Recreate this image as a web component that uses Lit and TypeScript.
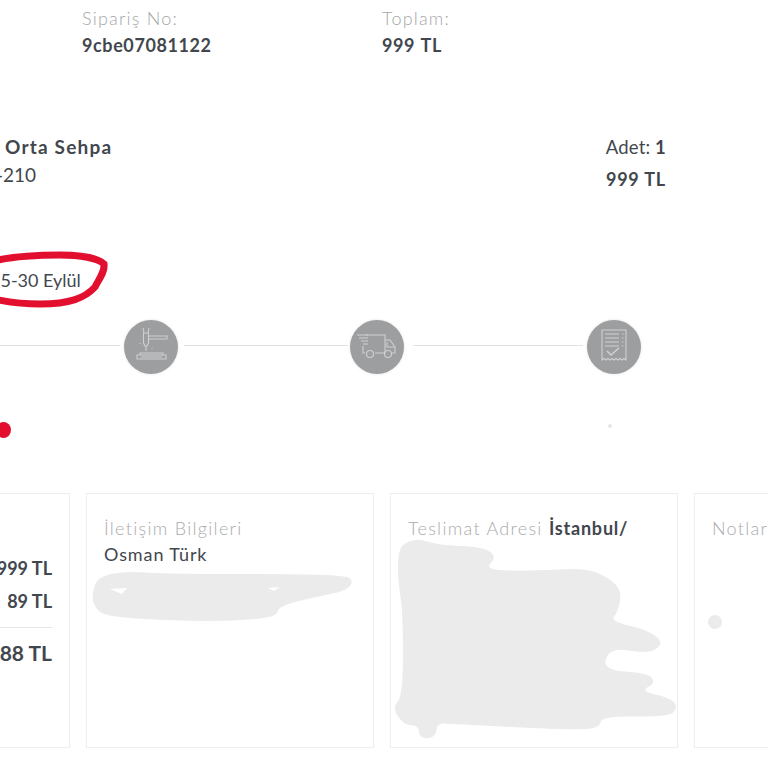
import { LitElement, html, css, svg } from 'lit';
import { customElement } from 'lit/decorators.js';

// rounds the corners of a traced shape, so the redaction blobs look brushed
const blob = (pts: number[][]) => {
  const mid = (a: number[], b: number[]) => `${(a[0] + b[0]) / 2} ${(a[1] + b[1]) / 2}`;
  let d = `M${mid(pts[pts.length - 1], pts[0])}`;
  pts.forEach((p, i) => {
    d += `Q${p[0]} ${p[1]} ${mid(p, pts[(i + 1) % pts.length])}`;
  });
  return `${d}Z`;
};

const contactBlob = blob([
  [92, 595], [97, 577], [125, 571], [167, 574], [345, 574], [354, 582], [345, 591], [320, 596],
  [278, 606], [277, 617], [233, 621], [187, 621], [105, 617], [94, 606],
]);

const addressBlob = blob([
  [401, 545], [417, 538], [437, 545], [484, 547], [497, 557], [484, 570], [531, 571], [584, 568],
  [606, 576], [622, 590], [618, 612], [610, 621], [651, 631], [664, 644], [648, 654], [610, 647],
  [602, 670], [648, 673], [656, 683], [640, 691], [671, 698], [678, 708], [668, 717], [601, 716],
  [600, 728], [571, 730], [451, 724], [437, 723], [436, 737], [420, 739], [418, 725], [404, 725],
  [392, 708], [403, 696], [403, 613], [398, 580], [398, 558],
]);

const weldIcon = svg`
  <path d="M13 35h29v4H13z" />
  <path d="M16 35v-2h23v2M17 37h21" />
  <path d="M19 8l1 5h4l1-5M19.500 13h5v10l-1.500 3h-2l-1.500-3zM22 26v5" />
  <path d="M25 16h18v3H25" />
  <path d="M16 23v1M28 28v1" />
`;

const truckIcon = svg`
  <path d="M16 15h19v18H25M15 33h-2v-7" />
  <path d="M35 20h5l5 7v6h-3M35 33h-1M37 22v5h7" />
  <circle cx="20" cy="34" r="3.500" />
  <circle cx="38" cy="34" r="3.500" />
  <path d="M7 15h11M9 18h9M11 21h7M13 24h5" />
`;

const receiptIcon = svg`
  <path d="M15 10h24v30l-2-1.500-2 1.500-2-1.500-2 1.500-2-1.500-2 1.500-2-1.500-2 1.500-2-1.500-2 1.500-2-1.500-2 1.500z" />
  <path d="M18 14h14M18 18h14M18 22h14M18 26h14M35 14h1.500M35 18h1.500M35 22h1.500M35 26h1.500" />
  <path d="M20 31l4 4 8-7" stroke-width="1.600" />
`;

@customElement('app-root')
export class AppRoot extends LitElement {
  static styles = css`
    :host {
      display: block;
      position: relative;
      height: 768px;
      overflow: hidden;
      background: #fff;
      color: #42474e;
      font-family: Lato, 'Open Sans', sans-serif;
      font-size: 18px;
      line-height: 27px;
    }

    .summary {
      display: grid;
      grid-template-columns: 300px 300px;
      padding: 5px 0 0 82px;
      letter-spacing: 1.200px;
    }

    .summary strong {
      letter-spacing: 0.6px;
      word-spacing: 1px;
    }

    .label {
      color: #a4a6a8;
      font-weight: 300;
    }

    strong {
      font-weight: 700;
    }

    .product {
      display: flex;
      justify-content: space-between;
      margin-top: 74px;
      padding: 0 102px 0 5px;
    }

    .product-name {
      font-size: 19px;
      letter-spacing: 1.200px;
      font-weight: 700;
    }

    .sku {
      margin-top: 1px;
      margin-left: -9px;
      font-size: 19px;
      font-weight: 400;
    }

    .quantity {
      padding-top: 1px;
      text-align: right;
      font-size: 18.500px;
      letter-spacing: 0.15px;
    }

    .quantity .price {
      margin-top: 5px;
      letter-spacing: 0.8px;
      font-size: 18px;
    }

    .delivery-date {
      margin: 73px 0 0 -10px;
      font-size: 18px;
      line-height: 28px;
    }

    .scribble {
      position: absolute;
      top: 0;
      left: 0;
      width: 110px;
      height: 320px;
      pointer-events: none;
      overflow: visible;
    }

    .timeline {
      display: flex;
      align-items: center;
      margin-top: 26px;
      height: 54px;
    }

    .line {
      height: 1px;
      margin-top: -3px;
      background: #e2e2e2;
    }

    .line-a {
      width: 120px;
      margin-right: 4px;
    }

    .line-b {
      width: 164px;
      margin: -3px 2px 0 6px;
    }

    .line-c {
      width: 168px;
      margin: -3px 4px 0 10px;
      border-left: 1px solid #d8d8d8;
      height: 1px;
      box-shadow: -1px 0 0 #f0f0f0;
    }

    .step {
      width: 54px;
      height: 54px;
      flex: none;
      border-radius: 50%;
      background: #9c9ea0;
      box-shadow: 0 0 3px rgba(0, 0, 0, 0.12);
    }

    .step svg {
      display: block;
      width: 54px;
      height: 54px;
      fill: none;
      stroke: #cfd0d1;
      stroke-width: 1.100;
    }

    .markers {
      display: flex;
      height: 16px;
      margin: 48px 0 0 -4px;
    }

    .red-dot {
      width: 15px;
      height: 16px;
      border-radius: 50%;
      background: #e2102e;
    }

    .grey-dot {
      width: 4px;
      height: 4px;
      margin: 2px 0 0 597px;
      border-radius: 50%;
      background: #e6e6e6;
    }

    .cards {
      display: grid;
      grid-template-columns: repeat(4, 288px);
      gap: 16px;
      margin: 55px 0 0 -218px;
    }

    .card {
      position: relative;
      box-sizing: border-box;
      height: 255px;
      padding: 21px 17px;
      border: 1px solid #eeeeee;
    }

    .card-title {
      color: #a9abad;
      font-weight: 300;
      letter-spacing: 1.300px;
    }

    .card-title strong {
      color: #42474e;
      letter-spacing: 0.8px;
    }

    .name {
      letter-spacing: 0.9px;
      line-height: 25px;
    }

    .totals {
      padding-top: 37px;
      text-align: right;
      font-weight: 700;
      line-height: 33px;
    }

    .totals hr {
      margin: 9px 0 8px;
      border: 0;
      border-top: 1px solid #e6e6e6;
    }

    .grand-total {
      font-size: 21px;
    }

    .redaction {
      position: absolute;
      top: -1px;
      left: -1px;
      width: 288px;
      height: 255px;
      overflow: visible;
      fill: #ebebeb;
    }

    .redaction .fleck {
      fill: #fff;
    }
  `;

  render() {
    return html`
      <section class="summary">
        <div>
          <div class="label">Sipariş No:</div>
          <strong>9cbe07081122</strong>
        </div>
        <div>
          <div class="label">Toplam:</div>
          <strong>999 TL</strong>
        </div>
      </section>

      <section class="product">
        <div>
          <div class="product-name">Orta Sehpa</div>
          <div class="sku">-210</div>
        </div>
        <div class="quantity">
          <div>Adet: <strong>1</strong></div>
          <div class="price"><strong>999 TL</strong></div>
        </div>
      </section>

      <div class="delivery-date">15-30 Eylül</div>

      <section class="timeline">
        <div class="line line-a"></div>
        <div class="step"><svg viewBox="0 0 54 54">${weldIcon}</svg></div>
        <div class="line line-b"></div>
        <div class="step"><svg viewBox="0 0 54 54">${truckIcon}</svg></div>
        <div class="line line-c"></div>
        <div class="step"><svg viewBox="0 0 54 54">${receiptIcon}</svg></div>
      </section>

      <div class="markers">
        <div class="red-dot"></div>
        <div class="grey-dot"></div>
      </div>

      <section class="cards">
        <div class="card">
          <div class="totals">
            <div>999 TL</div>
            <div>89 TL</div>
            <hr />
            <div class="grand-total">1088 TL</div>
          </div>
        </div>
        <div class="card">
          <div class="card-title">İletişim Bilgileri</div>
          <div class="name">Osman Türk</div>
          <svg class="redaction" viewBox="86 493 288 255">
            <path d=${contactBlob} />
            <path class="fleck" d="M110 589L127 588L122 594Z" />
            <path class="fleck" d="M268 588L280 587L274 591Z" />
          </svg>
        </div>
        <div class="card">
          <div class="card-title">Teslimat Adresi <strong>İstanbul/</strong></div>
          <svg class="redaction" viewBox="390 493 288 255">
            <path d=${addressBlob} />
          </svg>
        </div>
        <div class="card">
          <div class="card-title">Notlar</div>
          <svg class="redaction" viewBox="694 493 288 255">
            <circle cx="715" cy="622" r="7" />
          </svg>
        </div>
      </section>

      <svg class="scribble" viewBox="0 0 110 320">
        <path
          d="M-6 261C10 257 30 255 60 255C80 255 98 258 104 264C105 272 99 279 95 287C85 298 70 304 40 304C20 304 8 302 -6 299"
          fill="none"
          stroke="#e2102e"
          stroke-width="7"
          stroke-linecap="round"
        />
      </svg>
    `;
  }
}

declare global {
  interface HTMLElementTagNameMap {
    'app-root': AppRoot;
  }
}
